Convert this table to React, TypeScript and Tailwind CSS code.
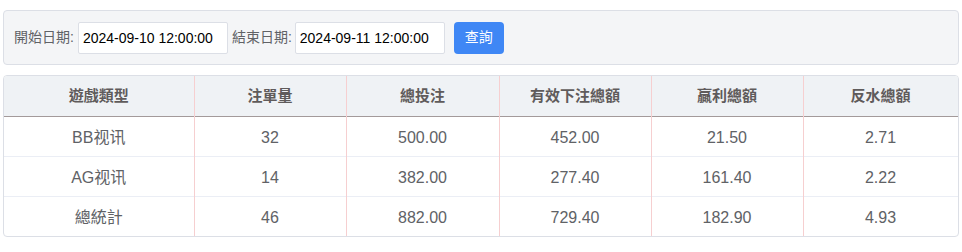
const rows = [
  { name: 'BB视讯', count: '32', bet: '500.00', valid: '452.00', win: '21.50', rebate: '2.71' },
  { name: 'AG视讯', count: '14', bet: '382.00', valid: '277.40', win: '161.40', rebate: '2.22' },
  { name: '總統計', count: '46', bet: '882.00', valid: '729.40', win: '182.90', rebate: '4.93' },
];

const headers = ['遊戲類型', '注單量', '總投注', '有效下注總額', '贏利總額', '反水總額'];
const widths = ['w-[190px]', 'w-[152px]', 'w-[153px]', 'w-[152px]', 'w-[152px]', 'w-[155px]'];

export default function App() {
  return (
    <div className="w-[962px] h-[252px] bg-white px-[3px] pt-[10px] font-['Liberation_Sans','Noto_Sans_CJK_TC',sans-serif] text-[#606266]">
      {/* Search bar */}
      <div className="h-[55px] flex items-center pl-[10px] bg-[#f4f5f7] border border-[#dcdfe6] rounded">
        <span className="text-[14px] mr-[4px]">開始日期:</span>
        <input
          readOnly
          value="2024-09-10 12:00:00"
          className="w-[150px] h-[32px] px-[4px] bg-white border border-[#dcdfe6] rounded-[2px] text-[14px] text-black outline-none"
        />
        <span className="text-[14px] ml-[4px] mr-[3px]">結束日期:</span>
        <input
          readOnly
          value="2024-09-11 12:00:00"
          className="w-[150px] h-[32px] px-[4px] bg-white border border-[#dcdfe6] rounded-[2px] text-[14px] text-black outline-none"
        />
        <button className="ml-[9px] w-[50px] h-[32px] rounded bg-[#3f87f5] text-white text-[14px]">查詢</button>
      </div>

      {/* Report table */}
      <div className="mt-[10px] border border-[#dcdfe6] rounded overflow-hidden">
        <table className="table-fixed border-collapse w-full">
          <thead>
            <tr className="h-[40px] bg-[#eff2f5] border-b border-[#a39a9a]">
              {headers.map((h, i) => (
                <th key={h} className={`${widths[i]} border-r border-[#f6cfd0] text-[15px] font-bold text-[#5f5b5b] p-0`}>
                  {h}
                </th>
              ))}
            </tr>
          </thead>
          <tbody>
            {rows.map((r, ri) => (
              <tr key={r.name} className={`h-[40px] ${ri < rows.length - 1 ? 'border-b border-[#ebeef5]' : ''}`}>
                {[r.name, r.count, r.bet, r.valid, r.win, r.rebate].map((v, i) => (
                  <td key={i} className="border-r border-[#f6cfd0] text-center text-[16px] pt-[3px] pb-0 px-0">
                    {v}
                  </td>
                ))}
              </tr>
            ))}
          </tbody>
        </table>
      </div>
    </div>
  );
}
